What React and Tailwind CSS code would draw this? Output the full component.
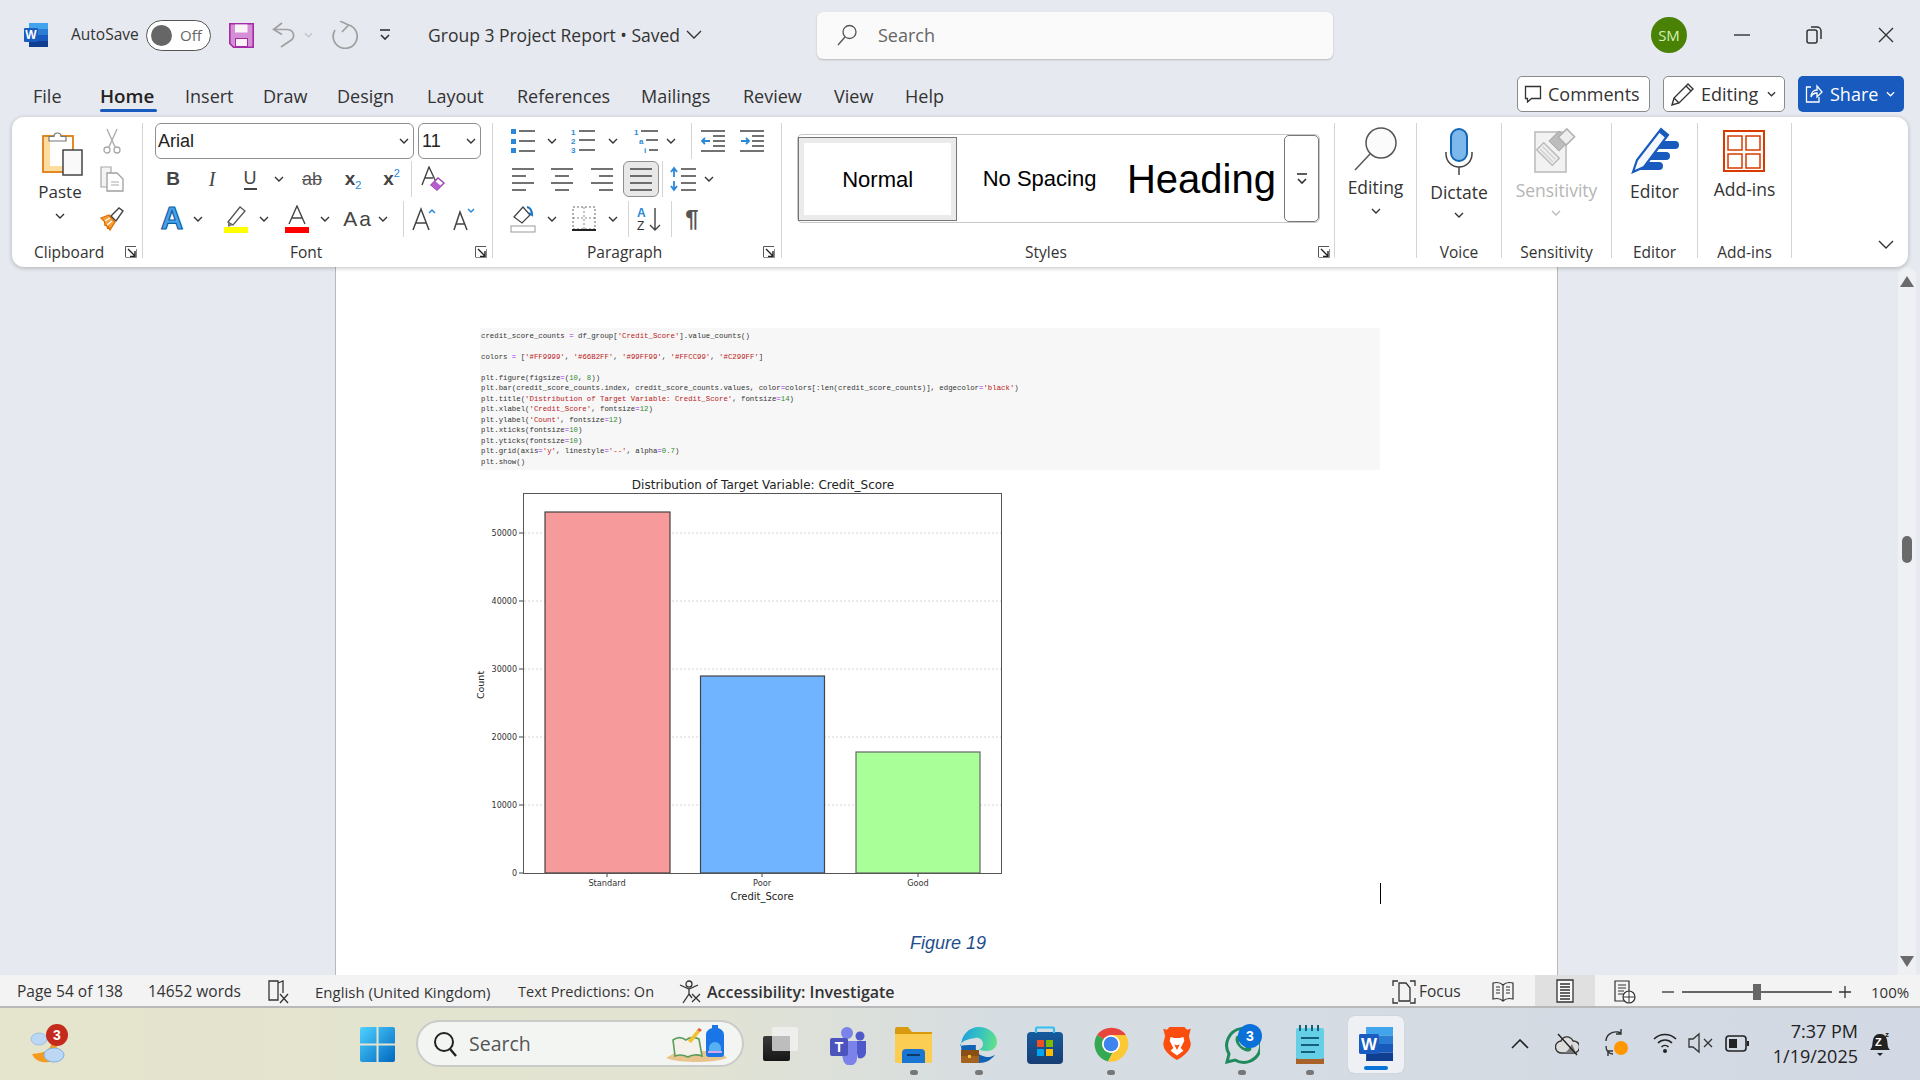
import React from "react";

const Chev = ({ c = "#333", w = 10 }) => (
  <svg width={w} height="6" viewBox="0 0 10 6" className="block"><path d="M1 1l4 4 4-4" fill="none" stroke={c} strokeWidth="1.4" /></svg>
);
const Cell = ({ className = "", children }) => (
  <div className={"flex h-full shrink-0 items-center justify-center " + className}>{children}</div>
);
const Sep = ({ className = "" }) => <div className={"h-[36px] w-px shrink-0 bg-[#d4d4d4] " + className} />;
const Launcher = () => (
  <svg width="12" height="12" viewBox="0 0 12 12" className="block shrink-0">
    <path d="M.5 11V.5H11" fill="none" stroke="#555" strokeWidth="1" />
    <path d="M3 3l7 7M10 5v5.500H5" fill="none" stroke="#222" strokeWidth="1.4" />
    <path d="M.5 11.500h11V3" fill="none" stroke="#888" strokeWidth="1" />
  </svg>
);
const Ln = ({ d }) => <path d={d} fill="none" stroke="#444" strokeWidth="1.4" />;

const WordIcon = ({ s = 24 }) => (
  <svg width={s} height={s} viewBox="0 0 24 24" className="block">
    <rect x="5" y="0" width="19" height="6" fill="#41a5ee" />
    <rect x="5" y="6" width="19" height="6" fill="#2b7cd3" />
    <rect x="5" y="12" width="19" height="6" fill="#185abd" />
    <rect x="5" y="18" width="19" height="6" fill="#103f91" />
    <rect x="0" y="5" width="14" height="14" rx="1" fill="#1a5cc0" />
    <text x="7" y="16" textAnchor="middle" fontSize="12" fontWeight="700" fill="#fff" fontFamily="'Liberation Sans'">W</text>
  </svg>
);

function TitleBar() {
  return (
    <div className="flex h-[70px] shrink-0 items-center pl-[24px]">
      <WordIcon />
      <span className="ml-[23px] w-[75px] text-[15.500px] text-[#333]">AutoSave</span>
      <div className="flex h-[31px] w-[65px] items-center rounded-full border border-[#555] bg-white pl-[4px]">
        <span className="h-[21px] w-[21px] rounded-full bg-[#666]" />
        <span className="ml-[8px] text-[15px] text-[#666]">Off</span>
      </div>
      <svg width="25" height="25" viewBox="0 0 25 25" className="ml-[18px]">
        <path d="M.8 .8h23.400v23.400H4.500L.8 20.500z" fill="#d58fd6" stroke="#a52aa5" strokeWidth="1.6" />
        <rect x="6" y="1.500" width="12.500" height="8" fill="#f9f3f9" />
        <rect x="6.500" y="15.500" width="12" height="8" fill="#f9f3f9" stroke="#a52aa5" />
      </svg>
      <svg width="26" height="26" viewBox="0 0 26 26" className="ml-[18px]">
        <path d="M10 1L1.500 7.500l8.500 5M1.500 7.500H15c6 0 8.500 6 5 10L9 25" fill="none" stroke="#a0a0a0" strokeWidth="1.700" />
      </svg>
      <div className="ml-[6px]"><Chev c="#c4c4c4" w={9} /></div>
      <svg width="26" height="28" viewBox="0 0 26 28" className="ml-[19px]">
        <path d="M17 4a12 12 0 1 1-14 5M8 0l8.500 4L10 11" fill="none" stroke="#a0a0a0" strokeWidth="1.700" />
      </svg>
      <svg width="12" height="14" viewBox="0 0 12 14" className="ml-[21px]">
        <path d="M1 2h10" stroke="#333" strokeWidth="1.6" />
        <path d="M2 7l4 4 4-4" fill="none" stroke="#333" strokeWidth="1.6" />
      </svg>
      <span className="ml-[37px] w-[258px] whitespace-nowrap text-[17.500px] text-[#333]">Group 3 Project Report • Saved</span>
      <svg width="16" height="10" viewBox="0 0 16 10"><path d="M1 1l7 7 7-7" fill="none" stroke="#333" strokeWidth="1.4" /></svg>
      <div className="ml-[115px] flex h-[47px] w-[516px] items-center rounded-[6px] bg-[#fafafa] pl-[20px] shadow-[0_1px_2px_#b9b9b9]">
        <svg width="20" height="22" viewBox="0 0 20 22"><circle cx="12.500" cy="8" r="6.500" fill="none" stroke="#555" strokeWidth="1.3" /><path d="M8 13l-7 8" stroke="#555" strokeWidth="1.3" /></svg>
        <span className="ml-[21px] text-[18px] text-[#666]">Search</span>
      </div>
      <div className="ml-[318px] flex h-[36px] w-[36px] items-center justify-center rounded-full bg-[#498205] text-[15px] text-[#d5f0b5]">SM</div>
      <svg width="16" height="4" viewBox="0 0 16 4" className="ml-[47px]"><path d="M0 2h16" stroke="#333" strokeWidth="1.4" /></svg>
      <svg width="16" height="18" viewBox="0 0 16 18" className="ml-[56px]">
        <rect x="1" y="4" width="10" height="13" rx="2" fill="none" stroke="#333" strokeWidth="1.5" />
        <path d="M5 1h6a4 4 0 0 1 4 4v8" fill="none" stroke="#333" strokeWidth="1.5" />
      </svg>
      <svg width="16" height="16" viewBox="0 0 16 16" className="ml-[56px]"><path d="M1 1l14 14M15 1L1 15" stroke="#333" strokeWidth="1.4" /></svg>
    </div>
  );
}

function TabRow() {
  const tabs = [
    ["File", "w-[67px]"], ["Home", "w-[85px]"], ["Insert", "w-[78px]"], ["Draw", "w-[74px]"], ["Design", "w-[90px]"],
    ["Layout", "w-[90px]"], ["References", "w-[124px]"], ["Mailings", "w-[102px]"], ["Review", "w-[91px]"], ["View", "w-[71px]"], ["Help", "w-[60px]"],
  ];
  return (
    <div className="flex h-[47px] shrink-0 pl-[33px]">
      {tabs.map(([t, w]) => (
        <div key={t} className={"relative h-full shrink-0 pt-[12px] leading-[28px] " + w + (t === "Home" ? " text-[18.800px] font-semibold text-[#222]" : " text-[18px] text-[#333]")}>
          {t}
          {t === "Home" && <div className="mt-[-1px] h-[3px] w-[57px] rounded-full bg-[#185abd]" />}
        </div>
      ))}
      <div className="ml-[552px] mt-[6px] flex h-[36px] w-[133px] shrink-0 items-center rounded-[5px] border border-[#8a8a8a] bg-white pl-[6px] text-[18px] text-[#333]">
        <svg width="18" height="18" viewBox="0 0 18 18"><path d="M1.500 1.500h15v12h-9l-4 3.500v-3.500h-2z" fill="none" stroke="#333" strokeWidth="1.3" /></svg>
        <span className="ml-[6px]">Comments</span>
      </div>
      <div className="ml-[13px] mt-[6px] flex h-[36px] w-[122px] shrink-0 items-center rounded-[5px] border border-[#8a8a8a] bg-white pl-[6px] text-[18px] text-[#333]">
        <svg width="25" height="25" viewBox="0 0 25 25"><path d="M2 23l2-7L18 2l5 5L9 21zM4 16l5 5M16 4l5 5" fill="none" stroke="#333" strokeWidth="1.4" /></svg>
        <span className="ml-[6px]">Editing</span>
        <div className="ml-[9px]"><Chev w={9} /></div>
      </div>
      <div className="ml-[13px] mt-[6px] flex h-[36px] w-[106px] shrink-0 items-center rounded-[5px] bg-[#185abd] pl-[7px] text-[18px] text-white">
        <svg width="18" height="20" viewBox="0 0 18 20"><path d="M6 3H1.500v15H14v-5M6 13c0-5 3-7 6-7V2l5 6-5 5V9c-3 0-5 1-6 4z" fill="none" stroke="#fff" strokeWidth="1.3" /></svg>
        <span className="ml-[7px]">Share</span>
        <div className="ml-[8px]"><Chev c="#fff" w={9} /></div>
      </div>
    </div>
  );
}

function Clipboard() {
  return (
    <div className="flex h-[135px] w-[131px] shrink-0 flex-col border-r border-[#d4d4d4]">
      <div className="flex h-[116px] pl-[10px]">
        <div className="flex w-[76px] flex-col items-center pt-[7px]">
          <svg width="41" height="46" viewBox="0 0 41 46" className="ml-[4px] block">
            <rect x="1" y="6" width="30" height="36" fill="#fff" stroke="#e07b10" strokeWidth="1.800" />
            <rect x="2" y="7" width="6" height="34" fill="#fddc9e" />
            <rect x="2" y="36" width="26" height="5" fill="#fddc9e" />
            <path d="M7 11V6.500h5a3.500 3.500 0 0 1 7 0h5V11z" fill="#fff" stroke="#777" strokeWidth="1.2" />
            <rect x="21" y="20" width="19" height="25" fill="#f9f9f9" stroke="#444" strokeWidth="1.5" />
          </svg>
          <span className="mt-[4px] h-[24px] text-[17px] leading-[24px] text-[#333]">Paste</span>
          <div className="mt-[9px]"><Chev /></div>
        </div>
        <div className="flex w-[28px] flex-col items-center">
          <div className="flex h-[36px] items-center">
            <svg width="18" height="26" viewBox="0 0 18 26"><path d="M4 1l8 18M14 1L6 19" stroke="#a8a8a8" strokeWidth="1.3" /><circle cx="4" cy="22" r="3" fill="none" stroke="#a8a8a8" strokeWidth="1.3" /><circle cx="14" cy="22" r="3" fill="none" stroke="#a8a8a8" strokeWidth="1.3" /></svg>
          </div>
          <div className="flex h-[40px] items-center">
            <svg width="25" height="26" viewBox="0 0 25 26"><path d="M1 1h10v20H1z" fill="#f4f4f4" stroke="#a8a8a8" strokeWidth="1.2" /><path d="M7 7h10l6 6v12H7z" fill="#fff" stroke="#a0a0a0" strokeWidth="1.3" /><path d="M11 16h8M11 19h8" stroke="#aaa" /></svg>
          </div>
          <div className="flex h-[40px] items-center">
            <svg width="24" height="24" viewBox="0 0 24 24">
              <path d="M1 11l8-3 6 7-5 8-1.500-3-1 1-1-3-1.500.5-.5-4z" fill="#f4a03c" stroke="#e06c00" strokeWidth="1.300" />
              <path d="M5 14l5-3M7 18l5-4" stroke="#fff" strokeWidth="1.200" />
              <path d="M11 9l8-8 4 3-7 10z" fill="#fff" stroke="#444" strokeWidth="1.4" />
            </svg>
          </div>
        </div>
      </div>
      <div className="flex h-[19px] items-start">
        <span className="ml-[22px] w-[88px] text-[15.500px] leading-[26px] text-[#333]">Clipboard</span>
        <div className="ml-[3px] mt-[7px]"><Launcher /></div>
      </div>
    </div>
  );
}

function FontGroup() {
  return (
    <div className="flex h-[135px] w-[350px] shrink-0 flex-col border-r border-[#d4d4d4]">
      <div className="flex h-[36px] pl-[12px]">
        <div className="flex h-full w-[259px] items-center justify-between rounded-[6px] border border-[#8f8f8f] pl-[2px] pr-[4px] font-['Liberation_Sans',sans-serif] text-[18px] text-[#222]">Arial<Chev /></div>
        <div className="ml-[4px] flex h-full w-[63px] items-center justify-between rounded-[6px] border border-[#8f8f8f] pl-[3px] pr-[4px] font-['Liberation_Sans',sans-serif] text-[18px] text-[#222]">11<Chev /></div>
      </div>
      <div className="flex h-[40px] items-center pl-[11px]">
        <Cell className="w-[38px] font-['Liberation_Sans',sans-serif] text-[19px] font-bold text-[#444]">B</Cell>
        <Cell className="w-[40px] font-['Liberation_Serif',serif] text-[20px] italic text-[#444]">I</Cell>
        <Cell className="w-[36px] flex-col font-['Liberation_Sans',sans-serif] text-[18px] text-[#444]"><span className="border-b-2 border-[#444] leading-[20px]">U</span></Cell>
        <Cell className="w-[22px]"><Chev /></Cell>
        <Cell className="w-[44px]">
          <span className="font-['Liberation_Sans',sans-serif] text-[18px] leading-none text-[#555] line-through">ab</span>
        </Cell>
        <Cell className="w-[38px] font-['Liberation_Sans',sans-serif] text-[19px] font-bold text-[#444]">x<span className="mt-[12px] text-[11px] font-normal text-[#2b88d8]">2</span></Cell>
        <Cell className="w-[39px] font-['Liberation_Sans',sans-serif] text-[19px] font-bold text-[#444]">x<span className="mt-[-12px] text-[11px] font-normal text-[#2b88d8]">2</span></Cell>
        <Sep />
        <Cell className="w-[40px]">
          <svg width="25" height="26" viewBox="0 0 25 26"><path d="M2 19L9 1l7 15M5 12h8" fill="none" stroke="#444" strokeWidth="1.4" /><path d="M11 19l7-7 6 5-7 7z" fill="#fff" stroke="#9a3fb5" strokeWidth="1.4" /><path d="M11 19l4-4 6 5-4 4z" fill="#b660cf" /></svg>
        </Cell>
      </div>
      <div className="flex h-[40px] items-center pl-[9px]">
        <Cell className="w-[40px]">
          <span className="font-['Liberation_Sans',sans-serif] text-[31px] font-bold leading-[40px] text-[#4aa3e8] [-webkit-text-stroke:1.200px_#0f5ea8]">A</span>
        </Cell>
        <Cell className="w-[12px]"><Chev /></Cell>
        <Cell className="ml-[12px] w-[40px]">
          <svg width="24" height="28" viewBox="0 0 24 28"><path d="M4 17L16 2l5 4L9 20z" fill="#fff" stroke="#555" strokeWidth="1.3" /><path d="M4 17l5 3-5 2z" fill="#777" /><rect x="0" y="22" width="24" height="6" fill="#ffff00" /></svg>
        </Cell>
        <Cell className="ml-[2px] w-[12px]"><Chev /></Cell>
        <Cell className="ml-[7px] w-[40px]">
          <svg width="24" height="28" viewBox="0 0 24 28"><path d="M4 19L12 1l8 18M7 13h10" fill="none" stroke="#444" strokeWidth="1.4" /><rect x="0" y="22" width="24" height="6" fill="#ff0000" /></svg>
        </Cell>
        <Cell className="ml-[2px] w-[12px]"><Chev /></Cell>
        <Cell className="ml-[9px] w-[36px] font-['Liberation_Sans',sans-serif] text-[21px] tracking-[2px] text-[#444]">Aa</Cell>
        <Cell className="ml-[1px] w-[12px]"><Chev /></Cell>
        <Sep className="ml-[14px]" />
        <Cell className="ml-[2px] w-[36px]">
          <svg width="24" height="26" viewBox="0 0 24 26"><path d="M1 24L9 3l8 21M4 17h10" fill="none" stroke="#444" strokeWidth="1.5" /><path d="M17 7l3-3 3 3" fill="none" stroke="#2b88d8" strokeWidth="1.5" /></svg>
        </Cell>
        <Cell className="ml-[4px] w-[36px]">
          <svg width="22" height="24" viewBox="0 0 22 24"><path d="M1 23L7 5l7 18M3 17h9" fill="none" stroke="#444" strokeWidth="1.5" /><path d="M15 2l3 3 3-3" fill="none" stroke="#2b88d8" strokeWidth="1.5" /></svg>
        </Cell>
      </div>
      <div className="flex h-[19px] items-start">
        <span className="ml-[147px] w-[185px] text-[15.500px] leading-[26px] text-[#333]">Font</span>
        <div className="mt-[7px]"><Launcher /></div>
      </div>
    </div>
  );
}

const Align = ({ d }) => (
  <svg width="24" height="24" viewBox="0 0 24 24" className="block"><Ln d={d} /></svg>
);

function Paragraph() {
  const dots = (
    <svg width="24" height="24" viewBox="0 0 24 24" className="block">
      <rect x="0" y="0" width="5" height="5" fill="#2b88d8" /><rect x="0" y="10" width="5" height="5" fill="#2b88d8" /><rect x="0" y="19" width="5" height="5" fill="#2b88d8" />
      <Ln d="M8 2h16M8 12h16M8 22h16" />
    </svg>
  );
  return (
    <div className="flex h-[135px] w-[289px] shrink-0 flex-col border-r border-[#d4d4d4]">
      <div className="flex h-[36px] items-center pl-[12px]">
        <Cell className="w-[36px]">{dots}</Cell>
        <Cell className="ml-[5px] w-[12px]"><Chev /></Cell>
        <Cell className="ml-[7px] w-[36px]">
          <svg width="24" height="26" viewBox="0 0 24 26" className="block">
            <text x="0" y="7" fontSize="8" fontWeight="700" fill="#2b88d8" fontFamily="'Liberation Sans'">1</text>
            <text x="0" y="16" fontSize="8" fontWeight="700" fill="#2b88d8" fontFamily="'Liberation Sans'">2</text>
            <text x="0" y="25" fontSize="8" fontWeight="700" fill="#2b88d8" fontFamily="'Liberation Sans'">3</text>
            <Ln d="M8 3h16M8 12h16M8 22h16" />
          </svg>
        </Cell>
        <Cell className="ml-[6px] w-[12px]"><Chev /></Cell>
        <Cell className="ml-[9px] w-[36px]">
          <svg width="24" height="26" viewBox="0 0 24 26" className="block">
            <text x="0" y="7" fontSize="8" fontWeight="700" fill="#2b88d8" fontFamily="'Liberation Sans'">1</text>
            <text x="5" y="16" fontSize="8" fontWeight="700" fill="#2b88d8" fontFamily="'Liberation Sans'">a</text>
            <text x="10" y="25" fontSize="8" fontWeight="700" fill="#2b88d8" fontFamily="'Liberation Sans'">i</text>
            <Ln d="M7 3h17M12 12h12M15 22h9" />
          </svg>
        </Cell>
        <Cell className="ml-[1px] w-[12px]"><Chev /></Cell>
        <Sep className="ml-[14px]" />
        <Cell className="ml-[3px] w-[36px]">
          <svg width="24" height="24" viewBox="0 0 24 24" className="block"><Ln d="M0 2h24M12 12h12M0 22h24M12 7h12M12 17h12" /><path d="M9 12H1m3-3l-3 3 3 3" fill="none" stroke="#2b88d8" strokeWidth="1.8" /></svg>
        </Cell>
        <Cell className="ml-[3px] w-[36px]">
          <svg width="24" height="24" viewBox="0 0 24 24" className="block"><Ln d="M0 2h24M12 12h12M0 22h24M12 7h12M12 17h12" /><path d="M1 12h8m-3-3l3 3-3 3" fill="none" stroke="#2b88d8" strokeWidth="1.8" /></svg>
        </Cell>
      </div>
      <div className="flex h-[40px] items-center pl-[12px]">
        <Cell className="w-[36px]"><Align d="M1 2h22M1 9h14M1 16h22M1 23h14" /></Cell>
        <Cell className="ml-[3px] w-[36px]"><Align d="M1 2h22M5 9h14M1 16h22M5 23h14" /></Cell>
        <Cell className="ml-[4px] w-[36px]"><Align d="M1 2h22M9 9h14M1 16h22M9 23h14" /></Cell>
        <div className="ml-[3px] flex h-[36px] w-[36px] shrink-0 items-center justify-center rounded-[6px] border border-[#8f8f8f] bg-[#e8e8e8]"><Align d="M1 2h22M1 9h22M1 16h22M1 23h22" /></div>
        <Sep className="ml-[3px]" />
        <Cell className="ml-[4px] w-[32px]">
          <svg width="28" height="26" viewBox="0 0 28 26" className="block"><Ln d="M12 3h15M12 10h15M12 17h15M12 24h15" /><path d="M5 11V2m-3 4l3-4 3 4M5 15v9m-3-4l3 4 3-4" fill="none" stroke="#2b88d8" strokeWidth="1.8" /></svg>
        </Cell>
        <Cell className="ml-[4px] w-[12px]"><Chev /></Cell>
      </div>
      <div className="flex h-[40px] items-center pl-[12px]">
        <Cell className="w-[36px]">
          <svg width="26" height="28" viewBox="0 0 26 28" className="block"><path d="M4 12l9-10 7 8-8 8z" fill="#fff" stroke="#444" strokeWidth="1.3" /><path d="M17 2c4 1 5 4 5 8l-3-2" fill="none" stroke="#1976c8" strokeWidth="2" /><rect x="1" y="21" width="24" height="6" fill="#fff" stroke="#999" /></svg>
        </Cell>
        <Cell className="ml-[5px] w-[12px]"><Chev /></Cell>
        <Cell className="ml-[8px] w-[36px]">
          <svg width="24" height="26" viewBox="0 0 24 26" className="block"><rect x="1" y="1" width="22" height="22" fill="none" stroke="#666" strokeDasharray="2 2" /><path d="M12 1v22M1 12h22" stroke="#888" strokeDasharray="2 2" /><path d="M0 24h24" stroke="#222" strokeWidth="2" /></svg>
        </Cell>
        <Cell className="ml-[5px] w-[12px]"><Chev /></Cell>
        <Sep className="ml-[9px]" />
        <Cell className="ml-[3px] w-[36px]">
          <svg width="26" height="26" viewBox="0 0 26 26" className="block">
            <text x="0" y="11" fontSize="12" fontWeight="700" fill="#2b88d8" fontFamily="'Liberation Sans'">A</text>
            <text x="0" y="24" fontSize="12" fill="#333" fontFamily="'Liberation Sans'">Z</text>
            <path d="M18 2v22m-5-5l5 5 5-5" fill="none" stroke="#444" strokeWidth="1.4" />
          </svg>
        </Cell>
        <Sep className="ml-[3px]" />
        <Cell className="ml-[2px] w-[36px] font-['Liberation_Sans',sans-serif] text-[24px] font-bold text-[#555]">¶</Cell>
      </div>
      <div className="flex h-[19px] items-start">
        <span className="ml-[94px] w-[176px] text-[15.500px] leading-[26px] text-[#333]">Paragraph</span>
        <div className="mt-[7px]"><Launcher /></div>
      </div>
    </div>
  );
}

function Styles() {
  return (
    <div className="flex h-[135px] w-[553px] shrink-0 flex-col border-r border-[#d4d4d4]">
      <div className="ml-[15px] mt-[11px] flex h-[89px] w-[523px] rounded-[5px] border border-[#c8c8c8] font-['Liberation_Sans',sans-serif] text-black">
        <div className="mt-[2px] flex h-[84px] w-[160px] items-center justify-center border border-[#777] bg-white text-[22px] shadow-[inset_0_0_0_5px_#ebebeb]">Normal</div>
        <div className="flex w-[165px] items-center justify-center text-[22px]">No Spacing</div>
        <div className="flex w-[160px] items-center justify-center text-[40px]">Heading</div>
        <div className="ml-[3px] flex w-[35px] flex-col items-center justify-center rounded-[5px] border border-[#777] bg-white">
          <svg width="12" height="14" viewBox="0 0 12 14"><path d="M1 2h10" stroke="#333" strokeWidth="1.6" /><path d="M2 7l4 4 4-4" fill="none" stroke="#333" strokeWidth="1.6" /></svg>
        </div>
      </div>
      <div className="mt-auto flex h-[19px] items-start">
        <span className="ml-[243px] w-[293px] text-[15.500px] leading-[26px] text-[#333]">Styles</span>
        <div className="mt-[7px]"><Launcher /></div>
      </div>
    </div>
  );
}

const Big = ({ w, label, sub, children, text, topPad, chevGap, gray }) => (
  <div className={"flex h-[135px] shrink-0 flex-col items-center border-r border-[#d4d4d4] " + w}>
    <div className={"flex h-[116px] flex-col items-center " + topPad}>
      {children}
      <span className={"h-[24px] text-[17.500px] leading-[24px] " + text + (gray ? " text-[#b5b5b5]" : " text-[#333]")}>{label}</span>
      {chevGap && <div className={chevGap}><Chev c={gray ? "#bbb" : "#333"} /></div>}
    </div>
    <span className="h-[19px] text-[15.500px] leading-[26px] text-[#333]">{sub}</span>
  </div>
);

function Ribbon() {
  return (
    <div className="relative z-10 mx-[12px] flex h-[150px] shrink-0 rounded-[12px] bg-white pt-[6px] shadow-[0_1px_4px_rgba(0,0,0,0.25)]">
      <Clipboard />
      <FontGroup />
      <Paragraph />
      <Styles />
      <Big w="w-[82px]" label="Editing" sub="" topPad="pt-[4px]" text="mt-[4px]" chevGap="mt-[9px]">
        <svg width="46" height="44" viewBox="0 0 46 44" className="block"><circle cx="28" cy="16" r="15" fill="#fbfbfb" stroke="#555" strokeWidth="1.5" /><path d="M17 27L2 43" stroke="#555" strokeWidth="1.5" /></svg>
      </Big>
      <Big w="w-[85px]" label="Dictate" sub="Voice" topPad="pt-[5px]" text="mt-[5px]" chevGap="mt-[8px]">
        <svg width="28" height="47" viewBox="0 0 28 47" className="block">
          <rect x="6" y="1" width="16" height="32" rx="8" fill="#7cb8ec" stroke="#1267b5" strokeWidth="2" />
          <path d="M1 24v2a13 13 0 0 0 26 0v-2" fill="none" stroke="#444" strokeWidth="1.5" />
          <path d="M14 39v8" stroke="#444" strokeWidth="1.5" />
        </svg>
      </Big>
      <Big w="w-[110px]" label="Sensitivity" sub="Sensitivity" topPad="pt-[5px]" text="mt-[5px]" chevGap="mt-[8px]" gray>
        <svg width="44" height="45" viewBox="0 0 44 45" className="block">
          <rect x="1" y="4" width="31" height="40" fill="#f2f2f2" stroke="#c4c4c4" strokeWidth="1.800" />
          <g transform="rotate(-45 14 26)">
            <rect x="9" y="15" width="10" height="22" fill="#eee" stroke="#bbb" strokeWidth="1.500" />
            <path d="M12 17v18M15.500 17v18" stroke="#c8c8c8" />
          </g>
          <rect x="18" y="6" width="14" height="14" fill="#bdbdbd" stroke="#aaa" transform="rotate(-45 25 13)" />
          <rect x="27" y="3" width="11" height="12" fill="#eee" stroke="#b0b0b0" strokeWidth="1.500" transform="rotate(45 32.500 9)" />
        </svg>
      </Big>
      <Big w="w-[86px]" label="Editor" sub="Editor" topPad="pt-[4px]" text="mt-[5px]">
        <svg width="48" height="47" viewBox="0 0 48 47" className="block">
          <path d="M24 14h20a4 4 0 0 1 0 8H20zM16 25h19a4 4 0 0 1 0 8H14zM10 35h18a4 4 0 0 1 0 8H8z" fill="#185abd" />
          <path d="M2 45L6 33 30 2l7 6L13 40z" fill="#f4f7fb" stroke="#185abd" strokeWidth="2.200" />
          <path d="M30 2l7 6-2.500 3-7-6z" fill="#185abd" />
        </svg>
      </Big>
      <Big w="w-[94px]" label="Add-ins" sub="Add-ins" topPad="pt-[7px]" text="mt-[5px]">
        <svg width="42" height="42" viewBox="0 0 42 42" className="block">
          <rect x="1" y="1" width="40" height="40" fill="none" stroke="#d83b01" strokeWidth="2" />
          <rect x="5" y="6" width="14" height="14" fill="none" stroke="#d83b01" strokeWidth="1.5" />
          <rect x="23" y="6" width="14" height="14" fill="none" stroke="#d83b01" strokeWidth="1.5" />
          <rect x="5" y="24" width="14" height="14" fill="none" stroke="#d83b01" strokeWidth="1.5" />
          <rect x="23" y="24" width="14" height="14" fill="none" stroke="#d83b01" strokeWidth="1.5" />
        </svg>
      </Big>
      <div className="flex flex-1 items-end justify-end pb-[17px] pr-[14px]">
        <svg width="16" height="10" viewBox="0 0 16 10"><path d="M1 1l7 7 7-7" fill="none" stroke="#333" strokeWidth="1.4" /></svg>
      </div>
    </div>
  );
}

const Q = ({ children }) => <span className="text-[#ba2121]">{children}</span>;
const N = ({ children }) => <span className="text-[#2e8b2e]">{children}</span>;
const O = ({ children }) => <span className="text-[#a020f0]">{children}</span>;

function Code() {
  return (
    <div className="h-[142px] w-[900px] bg-[#f7f7f7] pl-[1px] pt-[2.750px] font-['Liberation_Mono',monospace] text-[7.350px] font-medium leading-[10.500px] text-[#333] whitespace-pre">
      <div>credit_score_counts <O>=</O> df_group[<Q>'Credit_Score'</Q>].value_counts()</div>
      <div>&nbsp;</div>
      <div>colors <O>=</O> [<Q>'#FF9999'</Q>, <Q>'#66B2FF'</Q>, <Q>'#99FF99'</Q>, <Q>'#FFCC99'</Q>, <Q>'#C299FF'</Q>]</div>
      <div>&nbsp;</div>
      <div>plt.figure(figsize<O>=</O>(<N>10</N>, <N>8</N>))</div>
      <div>plt.bar(credit_score_counts.index, credit_score_counts.values, color<O>=</O>colors[:len(credit_score_counts)], edgecolor<O>=</O><Q>'black'</Q>)</div>
      <div>plt.title(<Q>'Distribution of Target Variable: Credit_Score'</Q>, fontsize<O>=</O><N>14</N>)</div>
      <div>plt.xlabel(<Q>'Credit_Score'</Q>, fontsize<O>=</O><N>12</N>)</div>
      <div>plt.ylabel(<Q>'Count'</Q>, fontsize<O>=</O><N>12</N>)</div>
      <div>plt.xticks(fontsize<O>=</O><N>10</N>)</div>
      <div>plt.yticks(fontsize<O>=</O><N>10</N>)</div>
      <div>plt.grid(axis<O>=</O><Q>'y'</Q>, linestyle<O>=</O><Q>'--'</Q>, alpha<O>=</O><N>0.7</N>)</div>
      <div>plt.show()</div>
    </div>
  );
}

function Chart() {
  const ticks = [[873, "0"], [805, "10000"], [737, "20000"], [669, "30000"], [601, "40000"], [533, "50000"]];
  const font = "'DejaVu Sans'";
  return (
    <svg width="580" height="440" viewBox="470 470 580 440" className="ml-[-10px] block">
      {ticks.slice(1).map(([y]) => (
        <path key={y} d={`M524 ${y}H1001`} stroke="#d4d4d4" strokeWidth="1" strokeDasharray="2 2" />
      ))}
      <rect x="545" y="512" width="125" height="361" fill="#f79a9b" stroke="#444" strokeWidth="1.200" />
      <rect x="700.500" y="676" width="124" height="197" fill="#70b3ff" stroke="#444" strokeWidth="1.200" />
      <rect x="856" y="752" width="124" height="121" fill="#a9ff98" stroke="#666" strokeWidth="1.200" />
      <rect x="523.500" y="493.500" width="478" height="380" fill="none" stroke="#555" strokeWidth="1" />
      <text x="763" y="489" textAnchor="middle" fontSize="12" fill="#222" fontFamily={font}>Distribution of Target Variable: Credit_Score</text>
      {ticks.map(([y, t]) => (
        <g key={t}>
          <path d={`M519 ${y}h4`} stroke="#444" />
          <text x="517" y={y + 3} textAnchor="end" fontSize="8" fill="#333" fontFamily={font}>{t}</text>
        </g>
      ))}
      {[[607, "Standard"], [762, "Poor"], [918, "Good"]].map(([x, t]) => (
        <g key={t}>
          <path d={`M${x} 874v3`} stroke="#444" />
          <text x={x} y="886" textAnchor="middle" fontSize="8.200" fill="#333" fontFamily={font}>{t}</text>
        </g>
      ))}
      <text x="762" y="900" textAnchor="middle" fontSize="10" fill="#222" fontFamily={font}>Credit_Score</text>
      <text transform="translate(484 685) rotate(-90)" textAnchor="middle" fontSize="9.500" fill="#222" fontFamily={font}>Count</text>
    </svg>
  );
}

function Doc() {
  return (
    <div className="flex min-h-0 flex-1">
      <div className="w-[335px] shrink-0" />
      <div className="relative w-[1223px] shrink-0 overflow-hidden border-x border-[#b9b9b9] bg-white pl-[144px] pt-[61px]">
        <Code />
        <Chart />
        <div className="ml-[430px] mt-[20px] w-[80px] whitespace-nowrap font-['Liberation_Sans',sans-serif] text-[18px] italic text-[#1f4e8c]">Figure 19</div>
        <div className="absolute left-[1044px] top-[616px] h-[21px] w-px bg-black" />
      </div>
      <div className="flex flex-1 justify-end pr-[4px]">
        <div className="flex w-[18px] flex-col items-center rounded-t-full bg-[#eef0f4] pt-[9px]">
          <svg width="14" height="11" viewBox="0 0 14 11"><path d="M7 0l7 11H0z" fill="#6a6a6a" /></svg>
          <div className="mt-[249px] h-[27px] w-[10px] rounded-full bg-[#6a6a6a]" />
          <div className="flex-1" />
          <svg width="14" height="11" viewBox="0 0 14 11" className="mb-[8px]"><path d="M7 11l7-11H0z" fill="#6a6a6a" /></svg>
        </div>
      </div>
    </div>
  );
}

function StatusBar() {
  return (
    <div className="flex h-[33px] shrink-0 items-center border-b-2 border-[#b6b8b9] bg-[#f3f3f3] pl-[17px] pt-[3px] text-[15.500px] text-[#333]">
      <span className="w-[131px]">Page 54 of 138</span>
      <span className="w-[120px]">14652 words</span>
      <svg width="22" height="24" viewBox="0 0 22 24" className="block">
        <path d="M1 1h9v19H1zM10 3l5-2v12M12 14l8 9m0-9l-8 9" fill="none" stroke="#333" strokeWidth="1.3" />
      </svg>
      <span className="ml-[25px] w-[203px] text-[15px]">English (United Kingdom)</span>
      <span className="w-[161px] text-[14.500px]">Text Predictions: On</span>
      <svg width="22" height="24" viewBox="0 0 22 24" className="block">
        <circle cx="10" cy="4" r="3" fill="none" stroke="#333" strokeWidth="1.300" />
        <path d="M1 5l9 4 9-4M10 9v5l-6 9M10 14l3 4M13 22l8-8m-8 0l8 8" fill="none" stroke="#333" strokeWidth="1.300" />
      </svg>
      <span className="ml-[6px] w-[220px] text-[16px] font-semibold">Accessibility: Investigate</span>
      <div className="flex-1" />
      <svg width="24" height="24" viewBox="0 0 24 24" className="block">
        <path d="M1 6V1h5M18 1h5v5M23 18v5h-5M6 23H1v-5" fill="none" stroke="#333" strokeWidth="1.300" />
        <path d="M7 3h7l4 5v13H7z" fill="none" stroke="#333" strokeWidth="1.300" />
      </svg>
      <span className="ml-[3px] w-[45px]">Focus</span>
      <svg width="22" height="22" viewBox="0 0 22 22" className="ml-[28px] block">
        <path d="M1 2c4-1 8 0 10 2 2-2 6-3 10-2v16c-4-1-8 0-10 2-2-2-6-3-10-2zM11 4v16M4 6h4M4 9h4M4 12h4M14 6h4M14 9h4M14 12h4" fill="none" stroke="#333" strokeWidth="1.200" />
      </svg>
      <div className="ml-[21px] mt-[-3px] flex h-[31px] w-[60px] items-center justify-center bg-[#e0e0e0]">
        <svg width="18" height="24" viewBox="0 0 18 24" className="block">
          <path d="M1 1h16v22H1z" fill="#fafafa" stroke="#333" strokeWidth="1.300" />
          <path d="M4 5h10M4 8h10M4 11h10M4 14h10M4 17h10M4 20h10" stroke="#333" strokeWidth="1.300" />
        </svg>
      </div>
      <svg width="22" height="24" viewBox="0 0 22 24" className="ml-[19px] block">
        <path d="M1 1h14v20H1zM4 5h8M4 8h8M4 11h6M4 14h6" fill="none" stroke="#333" strokeWidth="1.200" />
        <circle cx="15" cy="17" r="6" fill="#fff" stroke="#333" strokeWidth="1.200" />
        <path d="M9 17h12M15 11v12" stroke="#333" />
      </svg>
      <svg width="12" height="2" viewBox="0 0 12 2" className="ml-[26px]"><path d="M0 1h12" stroke="#333" strokeWidth="1.300" /></svg>
      <div className="ml-[8px] flex h-[12px] w-[150px] items-center justify-center bg-[linear-gradient(#0000_5px,#666_5px,#666_7px,#0000_7px)]">
        <div className="h-[16px] w-[8px] shrink-0 bg-[#666]" />
      </div>
      <svg width="12" height="12" viewBox="0 0 12 12" className="ml-[7px]"><path d="M0 6h12M6 0v12" stroke="#333" strokeWidth="1.300" /></svg>
      <span className="ml-[20px] w-[49px] text-[15px]">100%</span>
    </div>
  );
}

function Taskbar() {
  return (
    <div className="flex h-[72px] shrink-0 bg-[linear-gradient(90deg,#e5e5cd_0%,#e2e3d1_35%,#d6dde2_52%,#d2d9e4_100%)]">
      <div className="relative ml-[30px] mt-[17px] h-[40px] w-[36px] shrink-0">
        <svg width="36" height="40" viewBox="0 0 36 40" className="block">
          <path d="M22 18c-3 8-8 10-20 11 3 7 10 9 17 8 7-2 10-9 7-19z" fill="#f49a1e" />
          <ellipse cx="24" cy="30" rx="10" ry="7" fill="#bcd7f3" stroke="#7fb2e3" />
          <ellipse cx="9" cy="14" rx="8" ry="6" fill="#bcd7f3" stroke="#9dc0e6" />
        </svg>
        <div className="absolute left-[16px] top-[-1px] flex h-[22px] w-[22px] items-center justify-center rounded-full bg-[#c42b1c] font-['Liberation_Sans',sans-serif] text-[14px] font-bold text-white">3</div>
      </div>
      <div className="ml-[294px] mt-[19px] h-[35px] w-[35px] shrink-0">
        <svg width="35" height="35" viewBox="0 0 35 35" className="block">
          <defs><linearGradient id="w" x1="0" y1="0" x2="1" y2="1"><stop offset="0" stopColor="#4fd2ff" /><stop offset="1" stopColor="#0067c0" /></linearGradient></defs>
          <path d="M0 2a2 2 0 0 1 2-2h14.500v16.500H0zM18.500 0H33a2 2 0 0 1 2 2v14.500H18.500zM0 18.500h16.500V35H2a2 2 0 0 1-2-2zM18.500 18.500H35V33a2 2 0 0 1-2 2H18.500z" fill="url(#w)" />
        </svg>
      </div>
      <div className="ml-[21px] mt-[12px] flex h-[47px] w-[328px] shrink-0 items-center rounded-full border-2 border-[#c9cbc8] bg-[#f3f5f3] pl-[15px]">
        <svg width="24" height="26" viewBox="0 0 24 26" className="block"><circle cx="11" cy="11" r="9" fill="none" stroke="#222" strokeWidth="2" /><path d="M17 18l6 7" stroke="#222" strokeWidth="2.400" /></svg>
        <span className="ml-[12px] text-[19.500px] text-[#555]">Search</span>
        <svg width="66" height="40" viewBox="0 0 66 40" className="ml-[133px] block">
          <path d="M2 34l12-7h42l7 7c-8 3-20 4-30 4-12 0-24-1-31-4z" fill="#e8c58f" />
          <path d="M9 16c4-3 9-3 13 0 3-3 9-3 13-1l3 17c-5-2-11-1-14 1-4-2-8-3-13-1z" fill="#f3f1ea" stroke="#5d9c5a" strokeWidth="1.600" />
          <path d="M24 17l9-11 3 2-9 11z" fill="#f2c230" />
          <path d="M33 6l2-2 3 2-2 2z" fill="#ec5a3a" />
          <path d="M42 30V11c0-4 3-6 6-7V1h6v3c3 1 6 3 6 7v19a3 3 0 0 1-3 3H45a3 3 0 0 1-3-3z" fill="#1a76e6" />
          <path d="M45 24a6 6 0 0 1 12 0v5H45z" fill="#57b0f2" />
          <rect x="44" y="27" width="14" height="2" fill="#d7a6ea" />
        </svg>
      </div>
      <div className="ml-[19px] mt-[19px] shrink-0">
        <svg width="35" height="34" viewBox="0 0 35 34" className="block">
          <defs>
            <linearGradient id="tv" x1="0" y1="0" x2="0" y2="1"><stop offset="0" stopColor="#3a3a3a" /><stop offset="1" stopColor="#161616" /></linearGradient>
          </defs>
          <rect x="0" y="9" width="27" height="25" rx="2" fill="url(#tv)" />
          <rect x="9" y="0" width="26" height="24" rx="2" fill="#eeeeee" />
          <path d="M9 9h18v15H11a2 2 0 0 1-2-2z" fill="#bdbdbd" />
        </svg>
      </div>
      <div className="ml-[32px] mt-[19px] shrink-0">
        <svg width="36" height="38" viewBox="0 0 36 38" className="block">
          <circle cx="17" cy="6" r="6" fill="#7b83eb" />
          <circle cx="30" cy="9" r="4.500" fill="#5059c9" />
          <path d="M24 14h12v12a6 6 0 0 1-8 5z" fill="#5059c9" />
          <path d="M9 14h18v17a7 7 0 0 1-14 1z" fill="#7b83eb" />
          <rect x="0" y="11" width="18" height="18" rx="2" fill="#4b53bc" />
          <text x="9" y="25" textAnchor="middle" fontSize="14" fontWeight="700" fill="#fff" fontFamily="'Liberation Sans'">T</text>
        </svg>
      </div>
      <div className="ml-[29px] mt-[19px] flex shrink-0 flex-col items-center">
        <svg width="37" height="36" viewBox="0 0 37 36" className="block">
          <path d="M0 2a2 2 0 0 1 2-2h11l4 5h20v30H0z" fill="#d99a0f" />
          <path d="M0 7h37v27a2 2 0 0 1-2 2H2a2 2 0 0 1-2-2z" fill="#fbcd52" />
          <path d="M7 36V26a4 4 0 0 1 4-4h15a4 4 0 0 1 4 4v10z" fill="#1976d2" />
          <rect x="12" y="27" width="13" height="2" fill="#0d3a6b" />
        </svg>
        <div className="mt-[7px] h-[5px] w-[8px] rounded-full bg-[#777]" />
      </div>
      <div className="ml-[28px] mt-[19px] flex shrink-0 flex-col items-center">
        <svg width="37" height="36" viewBox="0 0 37 36" className="block">
          <defs><linearGradient id="e" x1="0" y1="0.300" x2="1" y2="0.500"><stop offset="0" stopColor="#1b9de2" /><stop offset="0.500" stopColor="#35c1c1" /><stop offset="1" stopColor="#5fe08a" /></linearGradient></defs>
          <path d="M1 19C1 8 9 0 19 0c10 0 18 7 18 15 0 6-5 9-10 9-4 0-7-1-8-2 2 0 4-2 4-5 0-4-4-7-8-6-7 1-14 3-15 8z" fill="url(#e)" />
          <path d="M1 19c0 10 8 17 18 17 7 0 12-3 16-8-4 2-8 3-12 1-6-2-8-6-7-11-7 0-14 0-15 1z" fill="#0f62b5" />
          <rect x="1" y="23" width="18" height="13" rx="1" fill="#a5621f" />
          <rect x="1" y="23" width="18" height="6" fill="#8a4f14" />
          <rect x="8" y="28" width="3" height="3" fill="#f2c230" />
        </svg>
        <div className="mt-[7px] h-[5px] w-[8px] rounded-full bg-[#777]" />
      </div>
      <div className="ml-[30px] mt-[18px] shrink-0">
        <svg width="36" height="38" viewBox="0 0 36 38" className="block">
          <defs><linearGradient id="st" x1="0" y1="0" x2="0" y2="1"><stop offset="0" stopColor="#155c9e" /><stop offset="1" stopColor="#173d74" /></linearGradient></defs>
          <rect x="0" y="6" width="36" height="32" rx="4" fill="url(#st)" />
          <path d="M9 7V2.500a1 1 0 0 1 1-1h16a1 1 0 0 1 1 1V7" fill="none" stroke="#33c0f0" strokeWidth="2.200" />
          <rect x="10" y="14" width="7" height="7" fill="#f25022" /><rect x="19" y="14" width="7" height="7" fill="#7fba00" />
          <rect x="10" y="23" width="7" height="7" fill="#00a4ef" /><rect x="19" y="23" width="7" height="7" fill="#ffb900" />
        </svg>
      </div>
      <div className="ml-[30px] mt-[18px] flex shrink-0 flex-col items-center">
        <svg width="36" height="36" viewBox="0 0 36 36" className="block">
          <path d="M18 18L4 9A18 18 0 0 1 33 9H18z" fill="#e8453c" />
          <path d="M4 9A18 18 0 0 0 15 35.500L22 22 18 18z" fill="#34a853" />
          <path d="M33 9H18l4 13-7 13.500A18 18 0 0 0 33 9z" fill="#fcc934" />
          <circle cx="18" cy="18" r="9" fill="#fff" /><circle cx="18" cy="18" r="7.300" fill="#3f83ee" />
        </svg>
        <div className="mt-[8px] h-[5px] w-[8px] rounded-full bg-[#777]" />
      </div>
      <div className="ml-[33px] mt-[19px] shrink-0">
        <svg width="30" height="33" viewBox="0 0 30 36" className="block">
          <path d="M7 0h16l3 3 4-1-2 8 2 8c0 8-8 14-15 18C8 32 0 26 0 18l2-8-2-8 4 1z" fill="#fb4d0d" />
          <path d="M8 11l4 1h6l4-1 1 4-4 8 3 3-7 5-7-5 3-3-4-8z" fill="#fff" />
          <path d="M12 19l3 1 3-1-3 6z" fill="#fb4d0d" />
        </svg>
      </div>
      <div className="relative ml-[31px] mt-[18px] flex w-[38px] shrink-0 flex-col items-center">
        <svg width="36" height="38" viewBox="0 0 36 38" className="block">
          <path d="M3 36l2-8a17 17 0 1 1 6 6z" fill="none" stroke="#1f8a5b" strokeWidth="3" />
          <path d="M12 11c1-2 3-2 4 0l1 3-2 2c1 3 3 5 6 6l2-2 3 1c2 1 2 3 0 4-6 3-17-8-14-14z" fill="#1f8a5b" />
        </svg>
        <div className="mt-[6px] h-[5px] w-[8px] rounded-full bg-[#777]" />
        <div className="absolute left-[15px] top-[-2px] flex h-[24px] w-[24px] items-center justify-center rounded-full bg-[#0b70d8] font-['Liberation_Sans',sans-serif] text-[14px] font-bold text-white">3</div>
      </div>
      <div className="ml-[35px] mt-[17px] flex shrink-0 flex-col items-center">
        <svg width="28" height="39" viewBox="0 0 28 39" className="block">
          <path d="M0 33h28v6H0z" fill="#a8622a" />
          <rect x="0" y="3" width="28" height="31" rx="2" fill="#65cfe8" />
          <path d="M4 0v6M10 0v6M16 0v6M22 0v6" stroke="#14607a" strokeWidth="2" />
          <path d="M5 13h18M5 20h18M5 27h14" stroke="#14607a" strokeWidth="2" />
        </svg>
        <div className="mt-[6px] h-[5px] w-[8px] rounded-full bg-[#777]" />
      </div>
      <div className="ml-[24px] mt-[8px] flex h-[57px] w-[56px] shrink-0 flex-col items-center rounded-[6px] bg-[#eef0f4] pt-[11px] shadow-[0_0_1px_#aaa]">
        <WordIcon s={34} />
        <div className="mt-[5px] h-[4px] w-[24px] rounded-full bg-[#0a74d8]" />
      </div>
      <svg width="18" height="10" viewBox="0 0 18 10" className="ml-[107px] mt-[31px] shrink-0"><path d="M1 9l8-8 8 8" fill="none" stroke="#222" strokeWidth="1.600" /></svg>
      <svg width="24" height="24" viewBox="0 0 24 24" className="ml-[26px] mt-[24px] shrink-0">
        <path d="M7 21a6 6 0 0 1-1-12c2-5 9-6 12 0a6 6 0 0 1 1 12z" fill="#ddd" stroke="#333" strokeWidth="1.400" />
        <path d="M6 21c6 0 8-4 11-9l4 9z" fill="#777" /><path d="M3 2l19 21" stroke="#222" strokeWidth="1.400" />
      </svg>
      <svg width="24" height="28" viewBox="0 0 24 28" className="ml-[25px] mt-[21px] shrink-0">
        <path d="M2 12C2 6 8 2 14 3l3 1M17 0v5h-5M2 17c0 5 3 8 7 8M4 27v-5h5" fill="none" stroke="#333" strokeWidth="1.400" />
        <circle cx="17" cy="19" r="7" fill="#ff9800" />
      </svg>
      <svg width="24" height="22" viewBox="0 0 24 22" className="ml-[25px] mt-[24px] shrink-0">
        <path d="M1 7c6-6 16-6 22 0M5 11c4-4 10-4 14 0M8.500 15c2-2 5-2 7 0" fill="none" stroke="#222" strokeWidth="1.600" /><circle cx="12" cy="19" r="2" fill="#222" />
      </svg>
      <svg width="26" height="22" viewBox="0 0 26 22" className="ml-[11px] mt-[24px] shrink-0">
        <path d="M1 7h4l6-5v18l-6-5H1z" fill="none" stroke="#333" strokeWidth="1.300" />
        <path d="M16 7l8 8m0-8l-8 8" stroke="#333" strokeWidth="1.300" />
      </svg>
      <svg width="24" height="18" viewBox="0 0 24 18" className="ml-[11px] mt-[27px] shrink-0">
        <rect x="1" y="1" width="20" height="15" rx="3" fill="none" stroke="#222" strokeWidth="1.600" /><rect x="4" y="4" width="8" height="9" fill="#222" /><rect x="22" y="6" width="2" height="5" fill="#222" />
      </svg>
      <div className="ml-[12px] mt-[11px] w-[97px] shrink-0 text-right text-[18px] leading-[25px] text-[#222]">
        <div>7:37 PM</div>
        <div>1/19/2025</div>
      </div>
      <svg width="24" height="30" viewBox="0 0 24 30" className="ml-[10px] mt-[21px] shrink-0">
        <path d="M2 21c3-3 2-6 3-10 1-5 4-6 7-6 3 0 6 1 7 6 1 4 0 7 3 10z" fill="#222" />
        <path d="M9 24h6l-3 3z" fill="#222" />
        <text x="7" y="17" fontSize="11" fontWeight="700" fill="#fff" fontFamily="'Liberation Sans'">Z</text>
        <text x="17" y="8" fontSize="8" fontWeight="700" fill="#222" fontFamily="'Liberation Sans'">z</text>
      </svg>
    </div>
  );
}

export default function App() {
  return (
    <div className="flex h-[1080px] w-[1920px] flex-col overflow-hidden bg-[#e6e9ef] font-['Open_Sans',sans-serif]">
      <TitleBar />
      <TabRow />
      <Ribbon />
      <Doc />
      <StatusBar />
      <Taskbar />
    </div>
  );
}
